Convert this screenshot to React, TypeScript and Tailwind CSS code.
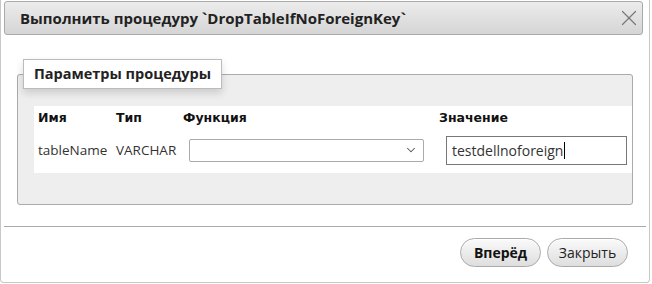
import { ChevronDown, X } from 'lucide-react';

const cols = [
    { label: 'Имя', w: 'w-[78px]' },
    { label: 'Тип', w: 'w-[67px]' },
    { label: 'Функция', w: 'w-[256px]' },
    { label: 'Значение', w: 'flex-1' },
];

const App = () => {
    return (
        <div className="h-[284px] w-[652px] bg-white font-['Open_Sans',sans-serif] text-[#222]">
            <div className="flex h-[283px] w-[650px] flex-col rounded-b-[4px] border-x border-b border-[#c8c8c8] bg-white px-[3px] pt-[1px]">
                {/* заголовок */}
                <div className="mr-[3px] flex h-[34px] items-center justify-between rounded-[3px] border border-[#aaa] bg-gradient-to-b from-[#ececec] to-[#d5d5d5] pl-[15px]">
                    <span className="text-[15px] font-bold text-[#222]">
                        Выполнить процедуру `DropTableIfNoForeignKey`
                    </span>
                    <X className="h-[26px] w-[26px] text-[#777]" strokeWidth={1.1} />
                </div>

                <div className="px-[13px] pt-[39px]">
                    <fieldset className="relative h-[131px] rounded-[3px] border border-[#aaa] bg-[#eee] pt-[31px] pl-[16px]">
                        <div className="absolute top-[-16px] left-[5px] border border-[#bbb] bg-white px-[10px] py-[4px] text-[14.5px] leading-[20px] font-bold shadow-[0_4px_8px_rgba(0,0,0,0.15)]">
                            Параметры процедуры
                        </div>
                        <div className="bg-white pt-[2px] pb-[9px] pl-[4px]">
                            <div className="flex h-[20px] items-center font-['DejaVu_Sans',sans-serif] text-[12.5px] font-bold text-[#111]">
                                {cols.map((c) => (
                                    <div key={c.label} className={c.w}>
                                        {c.label}
                                    </div>
                                ))}
                            </div>
                            <div className="mt-[8px] flex h-[28px] items-center text-[13.5px] text-[#333]">
                                <div className="w-[78px]">tableName</div>
                                <div className="w-[73px]">VARCHAR</div>
                                <div className="flex h-[23px] w-[235px] items-center justify-end rounded-[2px] border border-[#aaa] bg-white pr-[5px]">
                                    <ChevronDown className="h-[14px] w-[14px] text-[#555]" strokeWidth={1.8} />
                                </div>
                                <div className="ml-[22px] flex h-[29px] w-[181px] items-center border border-[#777] bg-white pl-[5px] text-[14px] text-[#333]">
                                    testdellnoforeign
                                    <span className="ml-[1px] h-[17px] w-px bg-black" />
                                </div>
                            </div>
                        </div>
                    </fieldset>
                </div>

                <div className="mt-[21px] h-px bg-[#aaa]" />

                <div className="flex justify-end gap-[6px] pt-[11px] pr-[18px]">
                    <button className="h-[29px] w-[81px] rounded-full border border-[#aaa] bg-gradient-to-b from-[#fafafa] to-[#dedede] text-[14px] font-bold text-[#111] shadow-[inset_0_1px_0_#fff]">
                        Вперёд
                    </button>
                    <button className="h-[29px] w-[81px] rounded-full border border-[#aaa] bg-gradient-to-b from-[#fafafa] to-[#dedede] text-[14px] text-[#222] shadow-[inset_0_1px_0_#fff]">
                        Закрыть
                    </button>
                </div>
            </div>
        </div>
    );
};

export default App;
